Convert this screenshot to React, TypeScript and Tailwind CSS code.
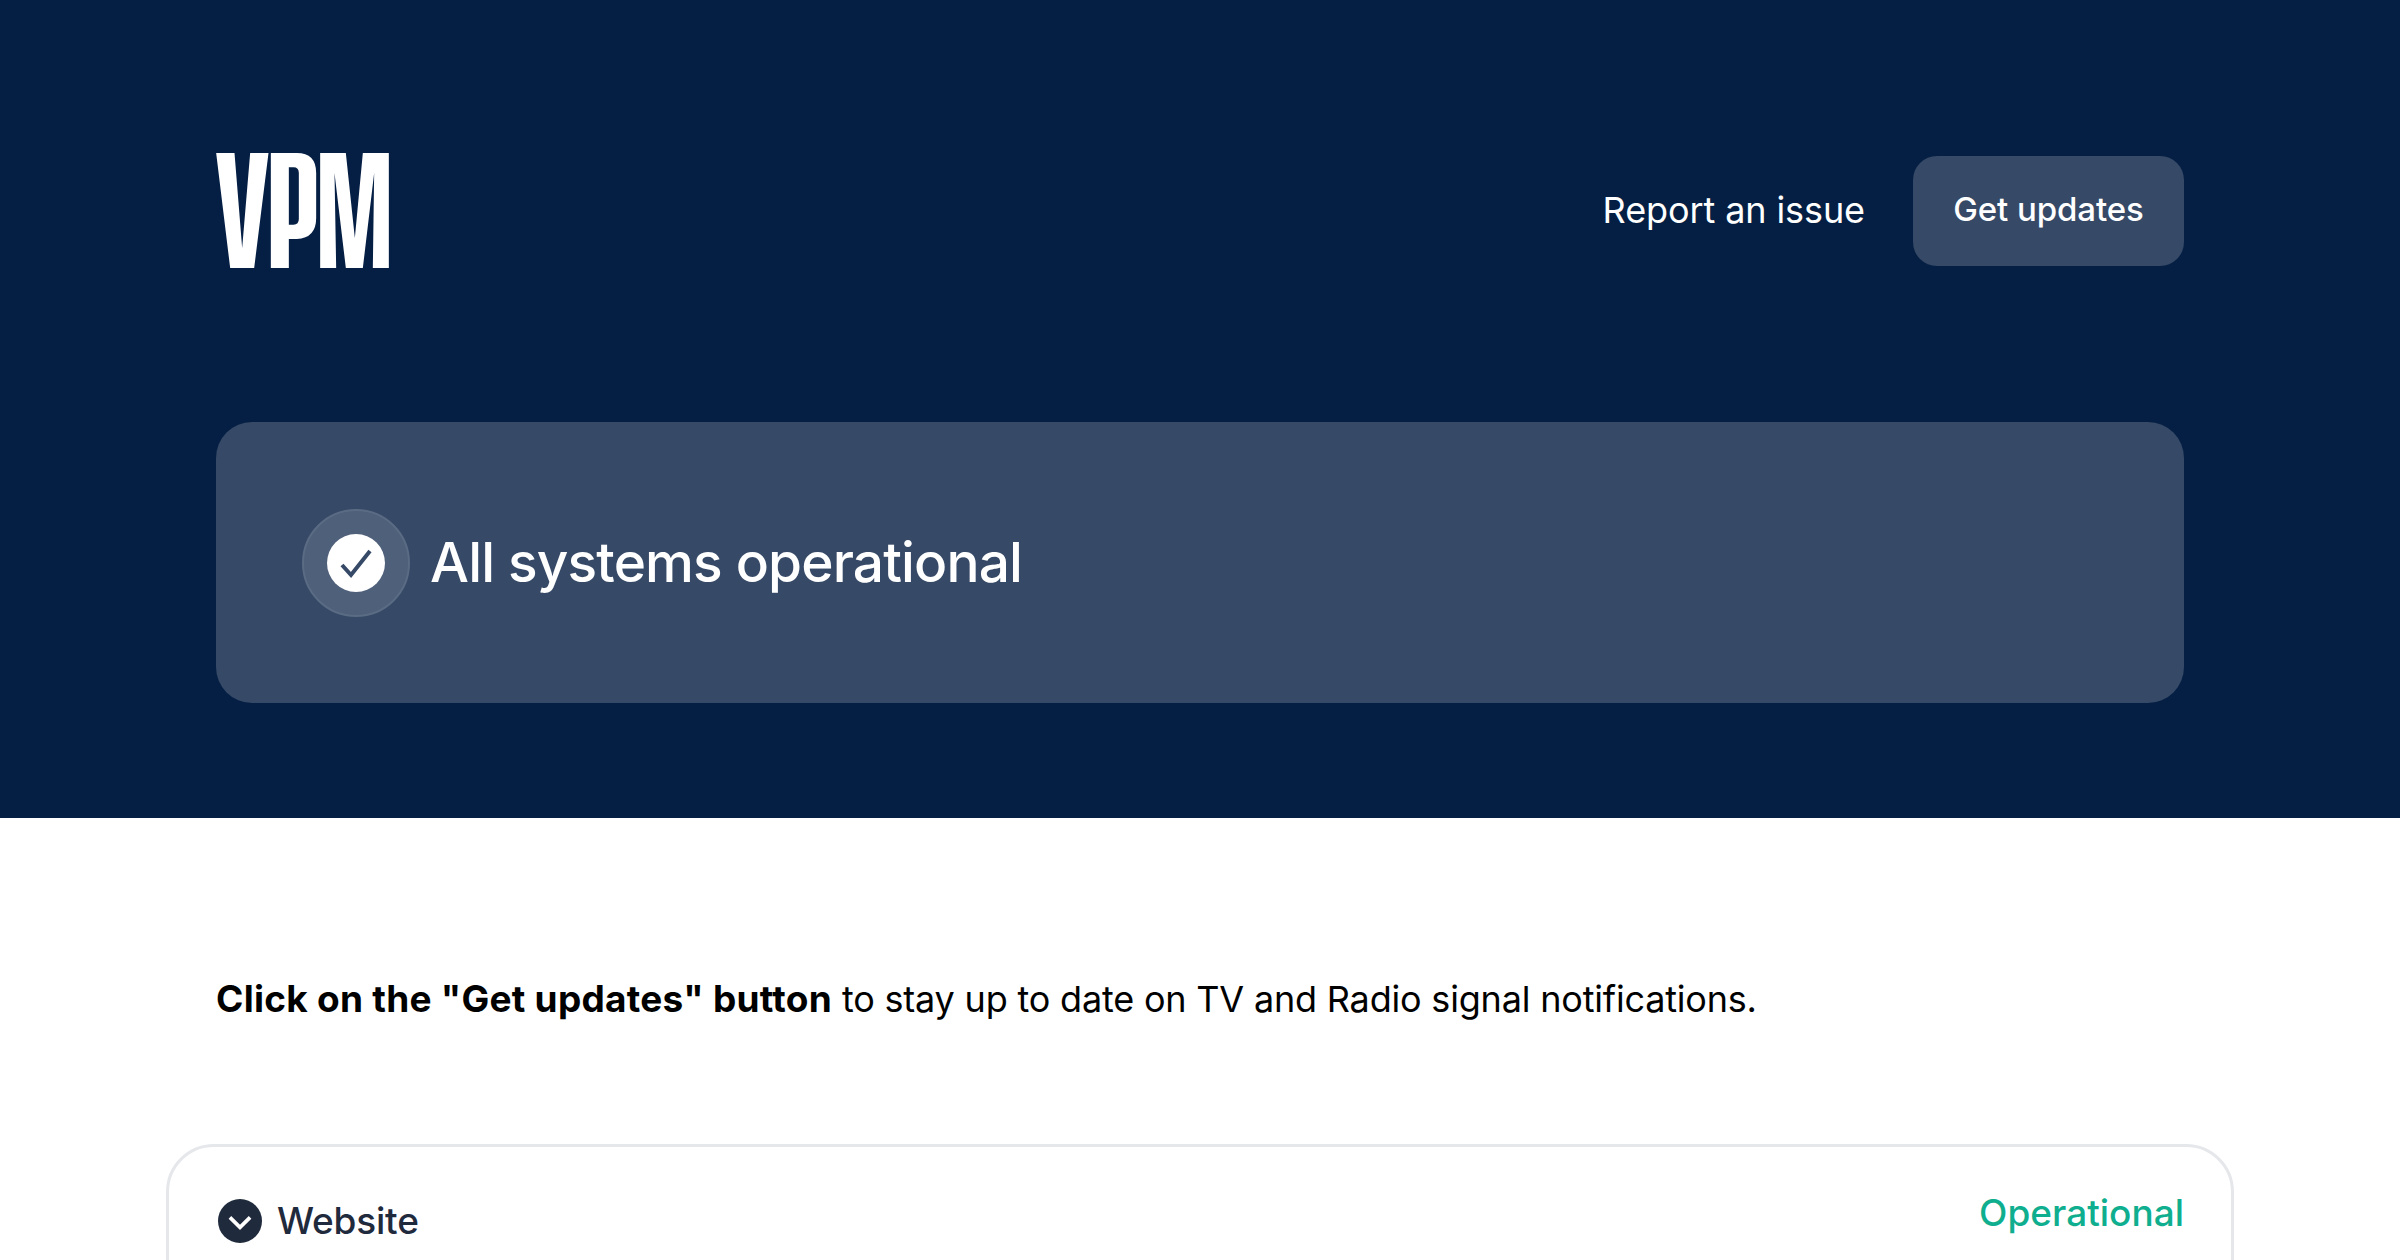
export default function App() {
  return (
    <div className="h-[1260px] overflow-hidden bg-white font-['Inter',sans-serif]">
      <header className="h-[818px] bg-[#051f44] px-[216px] pt-[153px]">
        <div className="flex h-[115px] items-center justify-between">
          <svg viewBox="108 100 518 345" className="h-[115px] w-[173px]" fill="#fff" role="img" aria-label="VPM">
            <path d="M108 100H163L186 385L210 100H265L222 445H150Z" />
            <path fillRule="evenodd" d="M272 100H350Q408 100 408 160V295Q408 355 350 358H326V445H272ZM326 143V315H340Q356 315 356 298V160Q356 143 340 143Z" />
            <path d="M420 100H497L524 355L548 100H626V445H578L582 160L548 445H497L463 160L468 445H420Z" />
          </svg>
          <div className="flex items-center gap-[48px]">
            <a className="-translate-y-[1px] text-[36px] leading-[48px] tracking-[-0.1px] text-white">Report an issue</a>
            <button className="flex h-[110px] w-[271px] items-center justify-center rounded-[24px] bg-[#364966] pb-[2px] text-[33px] font-medium tracking-[-0.1px] text-white">
              Get updates
            </button>
          </div>
        </div>
        <div className="mt-[154px] flex h-[281px] items-center gap-[20px] rounded-[36px] bg-[#364966] px-[86px]">
          <div className="flex h-[108px] w-[108px] items-center justify-center rounded-full border-2 border-[#5a6b84] bg-[#4f607a]">
            <div className="h-[58px] w-[58px] rounded-full bg-white">
              <svg viewBox="0 0 58 58" className="h-[58px] w-[58px]" fill="none" stroke="#364966" strokeWidth="4">
                <path d="M15 31L24 41L43 17" />
              </svg>
            </div>
          </div>
          <span className="text-[55px] font-medium tracking-[-0.85px] text-white">All systems operational</span>
        </div>
      </header>
      <p className="mt-[156px] px-[216px] text-[36px] leading-[50px] tracking-[-0.19px] text-black">
        <strong className="text-[37px] font-bold tracking-[0.26px]">Click on the "Get updates" button</strong> to stay up to date on TV and Radio signal notifications.
      </p>
      <section className="mx-[166px] mt-[120px] h-[300px] rounded-[48px] border-[3px] border-[#e5e7eb] pl-[49px] pr-[47px] pt-[34px]">
        <div className="flex items-start justify-between">
          <div className="flex items-center gap-[15px] pt-[12px]">
            <div className="h-[44px] w-[44px] rounded-full bg-[#1f2a3c]">
              <svg viewBox="0 0 24 24" className="h-[44px] w-[44px]" fill="none" stroke="#fff" strokeWidth="2">
                <path d="M6.5 10L12 15.5L17.5 10" />
              </svg>
            </div>
            <span className="text-[37px] font-medium tracking-[-0.2px] text-[#1f2a3c]">Website</span>
          </div>
          <span className="mt-[4px] text-[37px] font-medium text-[#0fae8f]">Operational</span>
        </div>
      </section>
    </div>
  );
}
